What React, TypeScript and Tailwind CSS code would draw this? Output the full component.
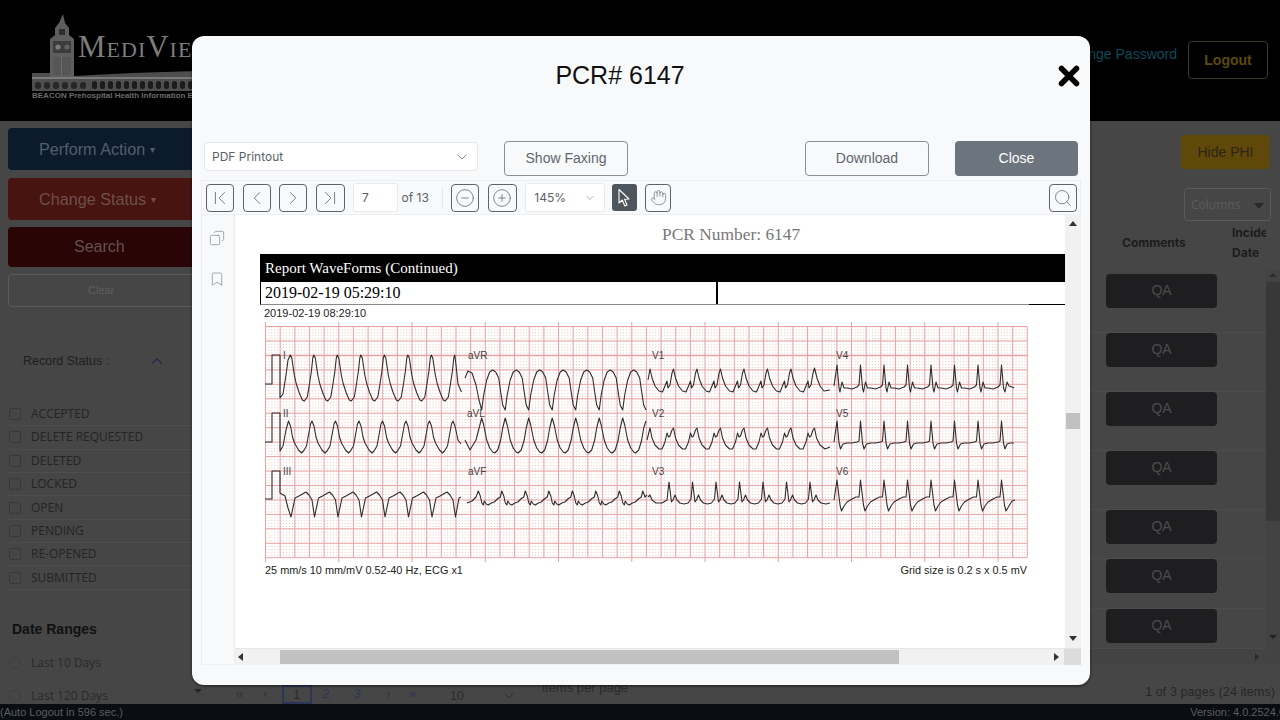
import {
  Bookmark,
  ChevronDown,
  ChevronFirst,
  ChevronLast,
  ChevronLeft,
  ChevronRight,
  ChevronUp,
  CircleMinus,
  CirclePlus,
  Copy,
  Hand,
  Search,
} from "lucide-react";

type Pt = [number, number];

const PERIOD = 23.5;

function trace(prefix: Pt[], x0: number, shape: Pt[], n: number, suffix: Pt[] = []) {
  const pts: Pt[] = [...prefix];
  for (let i = 0; i < n; i++) {
    for (const [dx, y] of shape) {
      pts.push([x0 + i * PERIOD + dx, y]);
    }
  }
  pts.push(...suffix);
  return pts.map(([x, y]) => `${x.toFixed(1)},${y}`).join(" ");
}

const leads: string[] = [
  // I
  trace([[265, 384], [272, 384], [272, 355], [280, 355], [280, 398], [283, 394], [286, 375], [288, 360]], 290.3,
    [[0, 355], [1.5, 358], [4, 375], [6, 384], [9, 393], [12, 400], [14, 401], [17, 397], [19, 385], [21, 372], [22.5, 358]], 7,
    [[454.8, 355], [456, 365], [458, 384], [461.5, 392]]),
  // II
  trace([[265, 442], [272, 442], [272, 413], [280, 413], [280, 451], [283, 446], [286, 430]], 288.5,
    [[0, 421], [2, 426], [4, 437], [6, 443], [10, 450], [13, 453], [15, 451], [18, 446], [20, 435], [22, 424]], 7,
    [[453, 421], [455, 426], [458, 440], [461, 444]]),
  // III
  trace([[265, 499], [272, 499], [272, 471], [280, 471], [280, 493], [285, 496], [288, 508]], 291,
    [[0, 517], [4, 498], [8, 496], [15, 492], [18, 495], [21, 500]], 7,
    [[455.5, 517], [459, 498], [461, 497]]),
  // aVR
  trace([[465, 378], [468, 371], [472, 373], [476, 385], [479, 400]], 481.7,
    [[0, 410], [2, 395], [5, 380], [8, 372], [11, 370], [14, 372], [17, 378], [19, 392], [21, 405]], 7,
    [[646, 410]]),
  // aVL
  trace([[465, 440], [470, 450], [476, 440]], 481.7,
    [[0, 418], [2, 425], [5, 440], [8, 448], [11, 452], [13, 453], [16, 450], [19, 440], [21, 428]], 7,
    [[646, 421]]),
  // aVF
  trace([[467, 503], [472, 501], [476, 497]], 478.3,
    [[0, 491], [2, 496], [3.5, 503], [5, 505], [6, 501], [8, 504], [10, 505], [13, 503], [16, 502], [19, 499], [22, 497]], 7,
    [[642.8, 491], [645, 497], [647, 495]]),
  // V1
  trace([[648, 380]], 650,
    [[0, 369], [2, 378], [5, 386], [9, 391], [12.5, 392], [15, 386], [17, 381], [18, 388], [20, 385], [22, 373]], 7,
    [[814.5, 368], [817, 378], [820, 386], [824, 391], [830, 390]]),
  // V2
  trace([[647, 440]], 650,
    [[0, 428], [2, 438], [5, 445], [9, 449], [12, 449], [15, 442], [17, 433], [18.5, 437], [20, 436], [22, 430]], 7,
    [[814.5, 428], [816.5, 438], [820, 445], [825, 449], [830, 447]]),
  // V3
  trace([[648, 497], [650, 495], [652, 500], [656, 503], [662, 503], [667, 500]], 669,
    [[0, 482], [2.5, 502], [4, 500], [6, 495], [8, 500], [11, 503], [15, 504], [19, 503], [22, 499]], 6,
    [[810, 482], [812.5, 502], [814, 500], [816, 495], [818, 500], [821, 503], [826, 504], [830, 503]]),
  // V4
  trace([[834, 386]], 837,
    [[0, 365], [2, 388], [3, 392], [5, 382], [7, 388], [10, 388], [15, 389], [20, 387], [22, 385]], 7,
    [[1001.5, 365], [1003.5, 388], [1005, 392], [1007, 382], [1009, 386], [1012, 387], [1014, 388]]),
  // V5
  trace([[834, 442]], 837,
    [[0, 421], [2, 443], [3.5, 449], [6, 444], [10, 443], [15, 443], [20, 442], [22, 441]], 7,
    [[1001.5, 421], [1003.5, 443], [1005, 449], [1007, 444], [1010, 443], [1014, 443]]),
  // V6
  trace([[834, 500]], 837,
    [[0, 480], [3, 505], [4.5, 511], [7, 506], [10, 502], [15, 499], [19, 497], [22, 497]], 7,
    [[1001.5, 480], [1004.5, 505], [1006, 511], [1009, 506], [1012, 501], [1015, 500]]),
];

const leadLabels: [string, number, number][] = [
  ["I", 283, 359], ["II", 283, 417], ["III", 283, 475],
  ["aVR", 468, 359], ["aVL", 467, 417], ["aVF", 468, 475],
  ["V1", 652, 359], ["V2", 652, 417], ["V3", 652, 475],
  ["V4", 836, 359], ["V5", 836, 417], ["V6", 836, 475],
];

function EcgChart() {
  const xs = Array.from({ length: 53 }, (_, i) => 265.5 + i * 14.65);
  const ys = Array.from({ length: 17 }, (_, i) => 326.5 + i * 14.45);
  const tall = [0, 5, 10, 15, 20, 25, 30, 35, 40, 45, 50];
  return (
    <svg width="764" height="242" viewBox="265 322 764 242" className="block">
      <defs>
        <pattern id="dots" x="265.5" y="326.5" width="2.93" height="2.89" patternUnits="userSpaceOnUse">
          <rect width="1" height="1" fill="#f3c4c4" />
        </pattern>
      </defs>
      <rect x="265.5" y="326.5" width="761" height="231" fill="url(#dots)" />
      {xs.map((x, i) => (
        <line
          key={i}
          x1={x}
          x2={x}
          y1={tall.includes(i) ? 322 : 326.5}
          y2={tall.includes(i) ? 562 : 557.7}
          stroke="#e8a3a3"
          strokeWidth="1"
        />
      ))}
      {ys.map((y, i) => (
        <line key={i} x1="265.5" x2="1027" y1={y} y2={y} stroke="#e8a3a3" strokeWidth={i === 2 ? 1.5 : 1} />
      ))}
      {leads.map((pts, i) => (
        <polyline key={i} points={pts} fill="none" stroke="#2e2e2e" strokeWidth="1.1" strokeLinejoin="round" />
      ))}
      {leadLabels.map(([t, x, y]) => (
        <text key={t} x={x} y={y} fontSize="10" fill="#444444" fontFamily="'Liberation Sans', sans-serif">
          {t}
        </text>
      ))}
    </svg>
  );
}

function LogoArt() {
  const arches = Array.from({ length: 17 }, (_, i) => 60 + i * 8);
  return (
    <svg width="165" height="80" viewBox="0 0 165 80" className="block">
      {/* clock tower */}
      <path d="M31 3 L33 12 L37 17 L37 24 L42 28 L42 66 L18 66 L18 28 L23 24 L23 17 L27 12 Z" fill="#5e5e5e" />
      <rect x="21" y="30" width="18" height="12" fill="#3c3c3c" />
      <circle cx="26" cy="36" r="2.6" fill="#7c7c7c" />
      <circle cx="35" cy="36" r="2.6" fill="#626262" />
      <rect x="27" y="18" width="6" height="6" fill="#2e2e2e" />
      <rect x="21" y="46" width="18" height="18" fill="#565656" />
      <rect x="29" y="46" width="1" height="18" fill="#6e6e6e" />
      {/* arcade */}
      <path d="M0 62 L18 62 L18 66 L42 66 L42 65 L100 62 L165 60 L165 80 L0 80 Z" fill="#4e4e4e" />
      <rect x="0" y="66" width="165" height="2" fill="#7a7a7a" />
      {arches.map((x) => (
        <rect key={x} x={x} y="70" width="5" height="8" rx="2.5" fill="#1c1c1c" />
      ))}
      {[3, 12, 21, 30, 39, 48].map((x) => (
        <rect key={x} x={x} y="71" width="6" height="7" rx="3" fill="#262626" />
      ))}
    </svg>
  );
}

function ToolButton({ children, className = "w-[28px]" }: { children: React.ReactNode; className?: string }) {
  return (
    <button className={`h-[28px] ${className} flex items-center justify-center rounded-[4px] border border-[#5f6368] text-[#6b7078] bg-[#f8f9fb]`}>
      {children}
    </button>
  );
}

const statuses = ["ACCEPTED", "DELETE REQUESTED", "DELETED", "LOCKED", "OPEN", "PENDING", "RE-OPENED", "SUBMITTED"];

const qaRows = ["h-[59px]", "h-[59px]", "h-[59px]", "h-[59px]", "h-[49px]", "h-[50px]", "h-[40px]"];

function Sidebar() {
  return (
    <aside className="w-[200px] shrink-0 overflow-hidden pl-[8px] pt-[7px]">
      <button className="block h-[42px] w-[200px] rounded-[4px] bg-[#0c1b2c] text-[#525e6b] text-[16.2px] text-left pl-[31px]">
        Perform Action <span className="text-[10px] align-[2px]">▾</span>
      </button>
      <button className="block mt-[8px] h-[42px] w-[200px] rounded-[4px] bg-[#471410] text-[#6e504c] text-[16.2px] text-left pl-[31px]">
        Change Status <span className="text-[10px] align-[2px]">▾</span>
      </button>
      <button className="block mt-[7px] h-[40px] w-[200px] rounded-[4px] bg-[#2a0505] text-[#655050] text-[16px] text-left pl-[66px]">
        Search
      </button>
      <button className="block mt-[7px] h-[33px] w-[200px] rounded-[4px] border border-[#5c5c5c] text-[#5e5e5e] text-[11px] text-left pl-[79px]">
        Clear
      </button>
      <div className="mt-[45px] flex items-center pl-[15px] pr-[34px] text-[#1e1e1e] text-[12.5px] justify-between">
        <span>Record Status :</span>
        <ChevronUp size={18} strokeWidth={1.5} className="text-[#24294a]" />
      </div>
      <ul className="mt-[32px] font-['Open_Sans',sans-serif] text-[12px] text-[#242424]">
        {statuses.map((s) => (
          <li key={s} className="h-[23.4px] flex items-center gap-[10px] pl-[1px] border-b border-[#4e4e4e]">
            <span className="w-[12px] h-[12px] rounded-[2px] border border-[#383838]" />
            {s}
          </li>
        ))}
      </ul>
      <h3 className="mt-[29px] pl-[4px] font-bold text-[14px] text-[#111111]">Date Ranges</h3>
      <div className="mt-[14px] flex items-center gap-[10px] pl-[1px] font-['Open_Sans',sans-serif] text-[12px] text-[#2a2a2a]">
        <span className="w-[12px] h-[12px] rounded-full border border-[#3e3e3e]" />
        Last 10 Days
      </div>
      <div className="mt-[15px] flex items-center gap-[10px] pl-[1px] font-['Open_Sans',sans-serif] text-[12px] text-[#2a2a2a]">
        <span className="w-[12px] h-[12px] rounded-full border border-[#3e3e3e]" />
        Last 120 Days
      </div>
    </aside>
  );
}

function MainPanel() {
  return (
    <main className="flex-1 min-w-0 flex flex-col">
      <div className="flex flex-col items-end pr-[10px] pt-[14px]">
        <button className="h-[34px] w-[89px] rounded-[4px] bg-[#5f480a] text-[#2a2619] text-[14px]">Hide PHI</button>
        <div className="mt-[19px] mr-[-1px] h-[33px] w-[87px] rounded-[4px] border border-[#5a5a5a] flex items-center justify-between px-[6px] text-[#5c5c5c] text-[12px] font-['Open_Sans',sans-serif]">
          Columns
          <span className="border-x-[5px] border-t-[6px] border-x-transparent border-t-[#2a2a2a] mt-[2px]" />
        </div>
      </div>
      <div className="flex-1 min-h-0 flex">
        <div className="flex-1 min-w-0">
          <div className="h-[53px] pb-[10px] pl-[922px] flex items-center text-[12px] font-bold font-['Inter',sans-serif] text-[#1c1c1c]">
            <span className="w-[96px]">Comments</span>
            <span className="ml-[14px] w-[34px] overflow-hidden leading-[20px] whitespace-nowrap">
              Incident
              <br />
              Date
            </span>
          </div>
          {qaRows.map((h, i) => (
            <div key={i} className={`${h} pl-[906px] border-b border-[#4c4c4c]`}>
              <button className="h-[34px] w-[111px] pb-[2px] rounded-[4px] bg-[#1e1e20] text-[#4c4c4c] text-[14px]">QA</button>
            </div>
          ))}
        </div>
        <div className="w-[14px] shrink-0 mt-[49px] flex flex-col items-center pt-[3px] bg-[#434343]">
          <span className="border-x-[4px] border-b-[4px] border-x-transparent border-b-[#2e2e2e]" />
          <div className="mt-[5px] w-full h-[239px] bg-[#383838]" />
          <span className="mt-auto mb-[10px] border-x-[4px] border-t-[4px] border-x-transparent border-t-[#222222]" />
        </div>
      </div>
      <div className="h-[15px] bg-[#434343] flex items-center justify-end pr-[21px]">
        <span className="border-y-[4px] border-l-[4px] border-y-transparent border-l-[#2a2a2a]" />
      </div>
      <div className="h-[40px] flex items-start text-[#2b2b2b] text-[13px]">
        <span className="ml-[-6px] mt-[25px] border-x-[4px] border-t-[4px] border-x-transparent border-t-[#222222]" />
        <span className="ml-[34px] mt-[20px] text-[#333333]">«</span>
        <span className="ml-[20px] mt-[20px] text-[#333333]">‹</span>
        <div className="ml-[14px] mt-[21px] w-[30px] h-[19px] border-2 border-[#2c3555] text-center leading-[15px]">1</div>
        <span className="ml-[11px] mt-[20px] text-[#2c3555]">2</span>
        <span className="ml-[24px] mt-[20px] text-[#2c3555]">3</span>
        <span className="ml-[25px] mt-[20px] text-[#333333]">›</span>
        <span className="ml-[18px] mt-[20px] text-[#2c3555]">»</span>
        <span className="ml-[34px] mt-[22px]">10</span>
        <ChevronDown size={16} strokeWidth={1} className="ml-[37px] mt-[24px] text-[#222222]" />
        <span className="ml-[25px] mt-[14px]">items per page</span>
        <span className="ml-auto mr-[5px] mt-[19px] text-[12.7px] text-[#262626]">1 of 3 pages (24 items)</span>
      </div>
    </main>
  );
}

function PdfPage() {
  return (
    <div className="w-[830px] h-[433px] overflow-hidden bg-white font-['Liberation_Serif',serif]">
      <div className="h-[39px] pt-[9px] pl-[427px] text-[17.4px] leading-[20px] text-[#777777]">PCR Number: 6147</div>
      <div className="ml-[25px] h-[28px] bg-black text-white text-[15px] leading-[28px] pl-[5px]">Report WaveForms (Continued)</div>
      <div className="ml-[25px] h-[23px] flex border-l border-b border-l-black border-b-[#888888] text-[16px] leading-[22px] text-black">
        <span className="w-[457px] pl-[4px] border-r-2 border-black">2019-02-19 05:29:10</span>
      </div>
      <div className="ml-[794px] h-px w-[36px] -mt-px bg-black" />
      <div className="ml-[29px] mt-[1px] text-[11px] leading-[14px] text-[#222222] font-['Liberation_Sans',sans-serif]">2019-02-19 08:29:10</div>
      <div className="ml-[30px] mt-[2px]">
        <EcgChart />
        <div className="w-[762px] mt-[-1px] flex justify-between text-[10.9px] leading-[14px] text-[#222222] font-['Liberation_Sans',sans-serif]">
          <span>25 mm/s 10 mm/mV 0.52-40 Hz, ECG x1</span>
          <span>Grid size is 0.2 s x 0.5 mV</span>
        </div>
      </div>
    </div>
  );
}

function PcrModal() {
  return (
    <div className="absolute left-[192px] top-[36px] w-[898px] h-[649px] rounded-[12px] bg-[#f8f9fb] shadow-[0_1px_3px_rgba(0,0,0,0.6)] flex flex-col">
      <div className="h-[105px] shrink-0 relative flex items-center justify-center pb-[25px] pr-[42px]">
        <h2 className="text-[25px] text-[#111111]">PCR# 6147</h2>
        <svg width="22" height="22" viewBox="0 0 22 22" className="absolute right-[10px] top-[29px]">
          <path d="M3.5 3.5 L18.5 18.5 M18.5 3.5 L3.5 18.5" stroke="#000000" strokeWidth="5.5" strokeLinecap="round" />
        </svg>
      </div>
      <div className="h-[35px] shrink-0 flex items-center pl-[12px] pr-[12px]">
        <div className="self-start mt-[1px] w-[274px] h-[29px] rounded-[4px] border border-[#e4e6ea] bg-white flex items-center justify-between pl-[7px] pr-[7px] text-[12px] text-[#5a5f66] font-['Inter',sans-serif]">
          PDF Printout
          <ChevronDown size={16} strokeWidth={1.25} className="text-[#6b7078]" />
        </div>
        <button className="ml-[26px] w-[124px] h-[35px] rounded-[4px] border border-[#8a8f94] text-[14px] text-[#5f666d]">Show Faxing</button>
        <button className="ml-auto w-[124px] h-[35px] rounded-[4px] border border-[#8a8f94] text-[14px] text-[#5f666d]">Download</button>
        <button className="ml-[26px] w-[123px] h-[35px] rounded-[4px] bg-[#6c757d] text-[14px] text-white">Close</button>
      </div>
      <div className="mx-[9px] mt-[4px] h-[35px] shrink-0 flex items-center pl-[4px] pr-[3px] gap-[8.5px] border border-[#eceef1] bg-[#f8f9fb] text-[12px] text-[#5a5f66] font-['Inter',sans-serif]">
        <ToolButton><ChevronFirst size={22} strokeWidth={1} /></ToolButton>
        <ToolButton><ChevronLeft size={22} strokeWidth={1} /></ToolButton>
        <ToolButton><ChevronRight size={22} strokeWidth={1} /></ToolButton>
        <ToolButton className="w-[29px]"><ChevronLast size={22} strokeWidth={1} /></ToolButton>
        <div className="w-[45px] h-[29px] rounded-[3px] border border-[#e8eaed] bg-white flex items-center pl-[8px]">7</div>
        <span className="-ml-[5px]">of 13</span>
        <div className="w-px h-[22px] bg-[#e4e6ea] ml-[5px] mr-[-1px]" />
        <ToolButton><CircleMinus size={20} strokeWidth={1} /></ToolButton>
        <ToolButton className="w-[29px] ml-[0.5px]"><CirclePlus size={20} strokeWidth={1} /></ToolButton>
        <div className="w-[80px] h-[29px] rounded-[3px] border border-[#e8eaed] bg-white flex items-center justify-between pl-[8px] pr-[8px]">
          145%
          <ChevronDown size={12} strokeWidth={1} />
        </div>
        <button className="-ml-[2px] w-[25px] h-[27px] rounded-[3px] bg-[#4f555c] flex items-center justify-center">
          <svg width="16" height="20" viewBox="0 0 16 20">
            <path d="M3 1.5 L3 15 L6.3 12 L8.8 18 L11 17 L8.6 11.3 L13 11 Z" fill="#4f555c" stroke="#ffffff" strokeWidth="1.1" strokeLinejoin="round" />
          </svg>
        </button>
        <ToolButton className="w-[26px]"><Hand size={17} strokeWidth={1} /></ToolButton>
        <div className="ml-auto">
          <ToolButton><Search size={20} strokeWidth={1} /></ToolButton>
        </div>
      </div>
      <div className="mx-[9px] h-[450px] shrink-0 flex">
        <div className="w-[34px] shrink-0 flex flex-col items-center gap-[25px] pt-[15px] pr-[2px] border-x border-b border-[#eceef1] text-[#7d828a]">
          <Copy size={16} strokeWidth={1} className="-scale-x-100" />
          <Bookmark size={16} strokeWidth={1} />
        </div>
        <div className="flex-1 min-w-0 flex flex-col">
          <div className="flex flex-1 min-h-0">
            <PdfPage />
            <div className="flex-1 bg-[#f1f1f1] flex flex-col items-center pt-[6px] pb-[7px]">
              <span className="border-x-[4px] border-b-[5px] border-x-transparent border-b-[#333333]" />
              <div className="mt-[187px] w-[14px] h-[16px] bg-[#c1c1c1]" />
              <span className="mt-auto border-x-[4px] border-t-[5px] border-x-transparent border-t-[#333333]" />
            </div>
          </div>
          <div className="h-[17px] shrink-0 flex items-center bg-[#f1f1f1] border-t border-[#e6e6e6]">
            <span className="ml-[3px] border-y-[4px] border-r-[5px] border-y-transparent border-r-[#333333]" />
            <div className="ml-[37px] w-[619px] h-[14px] bg-[#c1c1c1]" />
            <span className="ml-[155px] border-y-[4px] border-l-[5px] border-y-transparent border-l-[#333333]" />
            <div className="ml-auto w-[17px] h-full bg-[#dcdcdc]" />
          </div>
        </div>
      </div>
    </div>
  );
}

export default function App() {
  return (
    <div className="relative w-full h-screen overflow-hidden flex flex-col bg-[#464646] font-['Liberation_Sans',sans-serif]">
      <header className="h-[121px] shrink-0 bg-black flex items-start justify-between">
        <div className="relative ml-[32px] mt-[11px]">
          <LogoArt />
          <span className="absolute left-[46px] top-[18px] font-['Liberation_Serif',serif] [font-variant-caps:small-caps] text-[31px] leading-[36px] tracking-[1px] text-[#7d7d7d] whitespace-nowrap">
            MediView
          </span>
          <span className="block text-[8px] leading-[10px] font-bold text-[#6a6a6a] whitespace-nowrap">
            BEACON Prehospital Health Information Exchange
          </span>
        </div>
        <div className="flex items-center mr-[12px] mt-[41px]">
          <span className="text-[14px] text-[#0e4a58] -mt-[11px]">Change Password</span>
          <button className="ml-[11px] w-[80px] h-[38px] rounded-[4px] border border-[#3a3a30] text-[14px] font-bold text-[#5c4a10]">Logout</button>
        </div>
      </header>
      <div className="flex-1 min-h-0 flex">
        <Sidebar />
        <MainPanel />
      </div>
      <footer className="h-[16px] shrink-0 bg-[#0a0d12] flex items-center justify-between text-[11px] text-[#5a5e63] whitespace-nowrap">
        <span>(Auto Logout in 596 sec.)</span>
        <span className="mr-[-5px]">Version: 4.0.2524.0</span>
      </footer>
      <PcrModal />
    </div>
  );
}
